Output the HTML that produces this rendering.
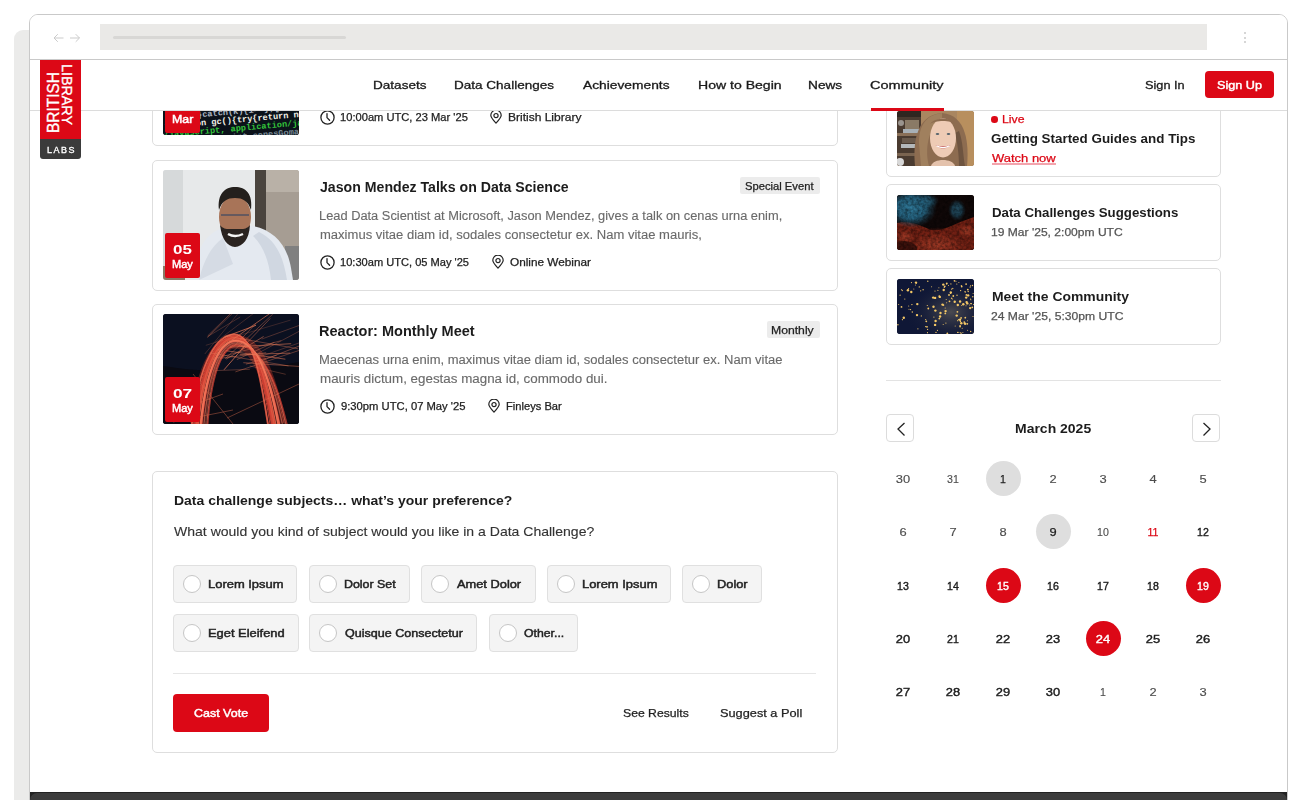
<!DOCTYPE html>
<html><head><meta charset="utf-8"><style>
html,body{margin:0;padding:0;}
body{width:1300px;height:800px;overflow:hidden;position:relative;background:#fff;font-family:"Liberation Sans",sans-serif;}
body>div{position:absolute;}
svg{display:block;}
</style></head><body>
<div style="left:14px;top:30px;width:40px;height:800px;background:#ebebea;border-top-left-radius:9px;"></div>
<div style="left:29px;top:14px;width:1259px;height:820px;background:#fff;border:1px solid #c9c9c9;border-radius:9px 9px 0 0;box-sizing:border-box;"></div>
<div style="left:152px;top:15px;width:686px;height:131px;border:1px solid #dedede;border-radius:5px;box-sizing:border-box;background:#fff;"></div>
<div style="left:163px;top:25px;width:136px;height:110px;border-radius:3px;overflow:hidden;background:#0c141c;"><svg width="136" height="110" viewBox="0 0 136 110" preserveAspectRatio="none">
<rect width="136" height="110" fill="#0b121a"/>
<g font-family="Liberation Mono" font-size="8.6" font-weight="700" transform="rotate(-5 68 98)">
<text x="8" y="81" fill="#6a7a86">xt/javascript"),a.load</text>
<text x="4" y="89.5" fill="#aab4c0">ontext}catch(k){i= };[</text>
<text x="2" y="98" fill="#f2f0e6">function gc(){try{return new a</text>
<text x="0" y="106.5" fill="#33c23a">/javascript, application/javascr</text>
<text x="6" y="115" fill="#7a8a96">text/javascript cenesGoma</text>
</g></svg></div>
<div style="left:165px;top:88px;width:35px;height:45px;background:#dc0816;border-radius:2px;"></div>
<div id="t0" style="left:173.36px;top:97.67px;font-size:13.5px;line-height:13.5px;color:#fff;white-space:nowrap;font-weight:700;transform:scaleX(1.2786);transform-origin:0 0;">23</div>
<div id="t1" style="left:172.13px;top:114.73px;font-size:10px;line-height:10px;color:#fff;white-space:nowrap;transform:scaleX(1.2328);transform-origin:0 0;-webkit-text-stroke:0.45px currentColor;">Mar</div>
<div style="left:320px;top:110px;width:15px;height:15px"><svg width="15" height="15" viewBox="0 0 15 15"><circle cx="7.5" cy="7.5" r="6.6" fill="none" stroke="#222" stroke-width="1.3"/><path d="M7 3.6 V7.6 L9.6 10.3" fill="none" stroke="#222" stroke-width="1.3" stroke-linecap="round" stroke-linejoin="round"/></svg></div>
<div id="t2" style="left:340.40px;top:112.11px;font-size:10.5px;line-height:10.5px;color:#222;white-space:nowrap;transform:scaleX(1.0611);transform-origin:0 0;-webkit-text-stroke:0.25px currentColor;">10:00am UTC, 23 Mar '25</div>
<div style="left:490px;top:110px;width:12px;height:14px"><svg width="12" height="14" viewBox="0 0 12 14"><path d="M6 13.2 C3.2 10.2 0.8 7.6 0.8 5.3 A5.2 5.2 0 0 1 11.2 5.3 C11.2 7.6 8.8 10.2 6 13.2 Z" fill="none" stroke="#222" stroke-width="1.2" stroke-linejoin="round"/><circle cx="6" cy="5.6" r="2.1" fill="none" stroke="#222" stroke-width="1.2"/></svg></div>
<div id="t3" style="left:507.54px;top:112.11px;font-size:10.5px;line-height:10.5px;color:#222;white-space:nowrap;transform:scaleX(1.1433);transform-origin:0 0;-webkit-text-stroke:0.25px currentColor;">British Library</div>
<div style="left:152px;top:160px;width:686px;height:131px;border:1px solid #dedede;border-radius:5px;box-sizing:border-box;background:#fff;"></div>
<div style="left:163px;top:170px;width:136px;height:110px;border-radius:3px;overflow:hidden;background:#e4e6e8;"><svg width="136" height="110" viewBox="0 0 136 110" preserveAspectRatio="none">
<rect width="136" height="110" fill="#e7e9ea"/>
<rect width="20" height="110" fill="#d6d9da"/>
<rect x="0" y="96" width="22" height="14" fill="#8a7a66"/>
<rect x="92" width="44" height="110" fill="#a69d93"/>
<rect x="92" width="11" height="110" fill="#4a443e"/>
<rect x="103" width="33" height="22" fill="#b9b1a7"/>
<rect x="122" y="76" width="14" height="34" fill="#808080"/>
<path d="M30 110 C32 84 40 64 60 58 L90 56 C110 60 124 74 128 98 L130 110 Z" fill="#e4e9f0"/>
<path d="M36 110 C40 92 48 76 60 68 L70 94 Z" fill="#d5dbe4"/>
<path d="M96 62 C112 70 120 84 124 110 L108 110 C106 90 100 76 90 66 Z" fill="#d0d7e1"/>
<ellipse cx="72" cy="47" rx="16" ry="22" fill="#a87458"/>
<path d="M56 40 C54 24 62 17 72 17 C83 17 90 24 88 40 C85 31 80 28 72 28 C64 28 59 31 56 40 Z" fill="#24201d"/>
<path d="M57 55 C59 70 64 76 72 77 C80 76 86 70 87 55 C83 60 79 59 72 59 C65 59 61 60 57 55 Z" fill="#2a2320"/>
<path d="M58 45 H86" stroke="#505060" stroke-width="1.6"/>
<path d="M65 64 Q72 68 80 64" stroke="#f4f4f4" stroke-width="2.4" fill="none"/>
</svg></div>
<div style="left:165px;top:233px;width:35px;height:45px;background:#dc0816;border-radius:2px;"></div>
<div id="t4" style="left:173.37px;top:242.67px;font-size:13.5px;line-height:13.5px;color:#fff;white-space:nowrap;font-weight:700;transform:scaleX(1.2561);transform-origin:0 0;">05</div>
<div id="t5" style="left:172.20px;top:259.74px;font-size:10px;line-height:10px;color:#fff;white-space:nowrap;transform:scaleX(1.1013);transform-origin:0 0;-webkit-text-stroke:0.45px currentColor;">May</div>
<div id="t6" style="left:320.25px;top:179.65px;font-size:14px;line-height:14px;color:#1c1c1c;white-space:nowrap;font-weight:700;transform:scaleX(1.0092);transform-origin:0 0;">Jason Mendez Talks on Data Science</div>
<div style="left:740px;top:177px;width:80px;height:17px;background:#ececec;border-radius:2px;"></div>
<div id="t7" style="left:744.93px;top:181.01px;font-size:10.5px;line-height:10.5px;color:#222;white-space:nowrap;transform:scaleX(1.0672);transform-origin:0 0;-webkit-text-stroke:0.25px currentColor;">Special Event</div>
<div id="t8" style="left:319.43px;top:209.64px;font-size:12px;line-height:12px;color:#6a6a6a;white-space:nowrap;transform:scaleX(1.0701);transform-origin:0 0;-webkit-text-stroke:0.12px currentColor;">Lead Data Scientist at Microsoft, Jason Mendez, gives a talk on cenas urna enim,</div>
<div id="t9" style="left:319.69px;top:229.04px;font-size:12px;line-height:12px;color:#6a6a6a;white-space:nowrap;transform:scaleX(1.0862);transform-origin:0 0;-webkit-text-stroke:0.12px currentColor;">maximus vitae diam id, sodales consectetur ex. Nam vitae mauris,</div>
<div style="left:320px;top:255px;width:15px;height:15px"><svg width="15" height="15" viewBox="0 0 15 15"><circle cx="7.5" cy="7.5" r="6.6" fill="none" stroke="#222" stroke-width="1.3"/><path d="M7 3.6 V7.6 L9.6 10.3" fill="none" stroke="#222" stroke-width="1.3" stroke-linecap="round" stroke-linejoin="round"/></svg></div>
<div id="t10" style="left:340.41px;top:257.11px;font-size:10.5px;line-height:10.5px;color:#222;white-space:nowrap;transform:scaleX(1.0557);transform-origin:0 0;-webkit-text-stroke:0.25px currentColor;">10:30am UTC, 05 May '25</div>
<div style="left:492px;top:255px;width:12px;height:14px"><svg width="12" height="14" viewBox="0 0 12 14"><path d="M6 13.2 C3.2 10.2 0.8 7.6 0.8 5.3 A5.2 5.2 0 0 1 11.2 5.3 C11.2 7.6 8.8 10.2 6 13.2 Z" fill="none" stroke="#222" stroke-width="1.2" stroke-linejoin="round"/><circle cx="6" cy="5.6" r="2.1" fill="none" stroke="#222" stroke-width="1.2"/></svg></div>
<div id="t11" style="left:510.12px;top:257.11px;font-size:10.5px;line-height:10.5px;color:#222;white-space:nowrap;transform:scaleX(1.1222);transform-origin:0 0;-webkit-text-stroke:0.25px currentColor;">Online Webinar</div>
<div style="left:152px;top:304px;width:686px;height:131px;border:1px solid #dedede;border-radius:5px;box-sizing:border-box;background:#fff;"></div>
<div style="left:163px;top:314px;width:136px;height:110px;border-radius:3px;overflow:hidden;background:#0a0e1a;"><svg width="136" height="110" viewBox="0 0 136 110" preserveAspectRatio="none">
<rect width="136" height="110" fill="#0b1020"/>
<path d="M0 52 C30 56 60 62 136 48 L136 110 L0 110 Z" fill="#0a0a12"/>
<path d="M34 110 C40 50 58 24 76 28 C96 32 108 70 116 110" stroke="#8a2a22" stroke-width="14" opacity="0.55" fill="none"/>
<path d="M35.1 112 C41.3 49.7 57.6 21.5 75.8 25.4 C95.6 29.6 105.1 70 113.0 112" stroke="#ff8a6a" stroke-width="1.5" opacity="0.68" fill="none"/><path d="M42.4 112 C47.1 51.9 61.2 25.8 77.3 30.5 C99.2 33.2 112.4 70 121.7 112" stroke="#d8503c" stroke-width="0.9" opacity="0.69" fill="none"/><path d="M38.1 112 C43.6 50.6 59.0 23.2 76.4 27.4 C97.0 31.0 108.1 70 116.5 112" stroke="#ff8a6a" stroke-width="0.9" opacity="0.60" fill="none"/><path d="M28.6 112 C36.1 47.8 54.3 17.6 74.5 20.8 C92.3 26.3 98.6 70 105.2 112" stroke="#e24a3a" stroke-width="1.9" opacity="0.75" fill="none"/><path d="M34.1 112 C40.5 49.4 57.1 20.9 75.6 24.7 C95.1 29.1 104.1 70 111.8 112" stroke="#d8503c" stroke-width="1.3" opacity="0.78" fill="none"/><path d="M38.2 112 C43.8 50.7 59.1 23.3 76.4 27.6 C97.1 31.1 108.2 70 116.7 112" stroke="#e24a3a" stroke-width="1.9" opacity="0.48" fill="none"/><path d="M30.4 112 C37.5 48.3 55.2 18.7 74.9 22.1 C93.2 27.2 100.4 70 107.3 112" stroke="#e24a3a" stroke-width="1.0" opacity="0.84" fill="none"/><path d="M32.9 112 C39.5 49.1 56.4 20.1 75.4 23.8 C94.4 28.4 102.9 70 110.2 112" stroke="#f06a50" stroke-width="1.5" opacity="0.71" fill="none"/><path d="M38.5 112 C44.0 50.8 59.3 23.5 76.5 27.8 C97.3 31.3 108.5 70 117.0 112" stroke="#e24a3a" stroke-width="1.4" opacity="0.68" fill="none"/><path d="M32.0 112 C38.8 48.8 56.0 19.6 75.2 23.2 C94.0 28.0 102.0 70 109.2 112" stroke="#e24a3a" stroke-width="2.2" opacity="0.80" fill="none"/><path d="M32.7 112 C39.3 49.0 56.3 20.0 75.3 23.7 C94.3 28.3 102.7 70 110.0 112" stroke="#c83a30" stroke-width="1.0" opacity="0.46" fill="none"/><path d="M37.1 112 C42.9 50.3 58.6 22.7 76.2 26.8 C96.6 30.6 107.1 70 115.4 112" stroke="#e24a3a" stroke-width="0.8" opacity="0.87" fill="none"/><path d="M34.0 112 C40.4 49.4 57.0 20.8 75.6 24.6 C95.0 29.0 104.0 70 111.5 112" stroke="#e24a3a" stroke-width="2.1" opacity="0.56" fill="none"/><path d="M43.7 112 C48.1 52.3 61.8 26.6 77.5 31.4 C99.8 33.8 113.7 70 123.2 112" stroke="#ff8a6a" stroke-width="0.7" opacity="0.94" fill="none"/><path d="M34.2 112 C40.5 49.4 57.1 20.9 75.6 24.7 C95.1 29.1 104.2 70 111.8 112" stroke="#f06a50" stroke-width="0.7" opacity="0.84" fill="none"/><path d="M31.9 112 C38.7 48.8 55.9 19.5 75.2 23.1 C93.9 27.9 101.9 70 109.0 112" stroke="#c83a30" stroke-width="0.7" opacity="0.46" fill="none"/><path d="M34.4 112 C40.7 49.5 57.2 21.0 75.7 24.9 C95.2 29.2 104.4 70 112.1 112" stroke="#f06a50" stroke-width="2.1" opacity="0.57" fill="none"/><path d="M28.8 112 C36.3 47.8 54.4 17.7 74.6 21.0 C92.4 26.4 98.8 70 105.4 112" stroke="#ff8a6a" stroke-width="0.7" opacity="0.54" fill="none"/><path d="M37.1 112 C42.9 50.3 58.5 22.6 76.2 26.7 C96.5 30.5 107.1 70 115.3 112" stroke="#f06a50" stroke-width="1.3" opacity="0.94" fill="none"/><path d="M40.9 112 C45.9 51.5 60.4 24.9 77.0 29.4 C98.4 32.4 110.9 70 119.8 112" stroke="#ff8a6a" stroke-width="1.3" opacity="0.51" fill="none"/><path d="M34.6 112 C40.9 49.6 57.3 21.1 75.7 25.0 C95.3 29.3 104.6 70 112.3 112" stroke="#c83a30" stroke-width="0.9" opacity="0.88" fill="none"/><path d="M44.5 112 C48.8 52.6 62.3 27.1 77.7 32.0 C100.3 34.3 114.5 70 124.3 112" stroke="#e24a3a" stroke-width="1.5" opacity="0.56" fill="none"/><path d="M34.1 112 C40.5 49.4 57.0 20.9 75.6 24.7 C95.0 29.0 104.1 70 111.7 112" stroke="#d8503c" stroke-width="2.0" opacity="0.50" fill="none"/><path d="M44.8 112 C49.0 52.6 62.4 27.3 77.8 32.2 C100.4 34.4 114.8 70 124.6 112" stroke="#c83a30" stroke-width="0.9" opacity="0.45" fill="none"/><path d="M38.0 112 C43.6 50.6 59.0 23.2 76.4 27.4 C97.0 31.0 108.0 70 116.4 112" stroke="#ff8a6a" stroke-width="1.9" opacity="0.49" fill="none"/><path d="M28.6 112 C36.1 47.8 54.3 17.6 74.5 20.8 C92.3 26.3 98.6 70 105.1 112" stroke="#f06a50" stroke-width="1.5" opacity="0.46" fill="none"/><path d="M62.1 44.9 L109.7 0.2" stroke="#e67a58" stroke-width="0.82" opacity="0.47"/><path d="M63.2 45.1 L100.6 22.5" stroke="#e67a58" stroke-width="0.71" opacity="0.76"/><path d="M49.5 45.2 L118.3 26.6" stroke="#e67a58" stroke-width="0.59" opacity="0.64"/><path d="M44.7 21.9 L88.1 -20.6" stroke="#e67a58" stroke-width="0.53" opacity="0.77"/><path d="M63.5 36.8 L122.4 45.2" stroke="#e67a58" stroke-width="0.66" opacity="0.86"/><path d="M98.6 25.1 L163.7 1.4" stroke="#e67a58" stroke-width="0.71" opacity="0.44"/><path d="M52.7 56.6 L86.9 55.3" stroke="#e67a58" stroke-width="0.61" opacity="0.52"/><path d="M42.8 31.3 L127.5 6.1" stroke="#e67a58" stroke-width="0.45" opacity="0.47"/><path d="M67.0 33.2 L128.2 29.7" stroke="#e67a58" stroke-width="0.87" opacity="0.69"/><path d="M95.4 39.0 L138.4 16.1" stroke="#e67a58" stroke-width="0.42" opacity="0.70"/><path d="M44.5 22.7 L77.2 3.0" stroke="#e67a58" stroke-width="0.44" opacity="0.63"/><path d="M62.1 21.8 L135.1 34.8" stroke="#e67a58" stroke-width="0.46" opacity="0.88"/><path d="M60.5 23.4 L93.0 11.3" stroke="#e67a58" stroke-width="0.83" opacity="0.87"/><path d="M41.8 40.0 L86.1 -13.9" stroke="#e67a58" stroke-width="0.59" opacity="0.41"/><path d="M44.3 23.6 L77.0 -7.9" stroke="#e67a58" stroke-width="0.61" opacity="0.57"/><path d="M96.1 47.8 L149.8 26.7" stroke="#e67a58" stroke-width="0.67" opacity="0.66"/><path d="M70.9 32.4 L92.7 9.9" stroke="#e67a58" stroke-width="0.88" opacity="0.46"/><path d="M86.8 46.4 L165.8 18.4" stroke="#e67a58" stroke-width="0.58" opacity="0.47"/><path d="M76.7 40.7 L127.2 39.1" stroke="#e67a58" stroke-width="0.87" opacity="0.65"/><path d="M54.5 36.2 L110.2 -2.9" stroke="#e67a58" stroke-width="0.80" opacity="0.78"/><path d="M52.0 28.6 L120.0 -22.9" stroke="#e67a58" stroke-width="0.50" opacity="0.47"/><path d="M61.0 55.8 L83.3 30.3" stroke="#e67a58" stroke-width="0.89" opacity="0.81"/><path d="M46.8 38.9 L125.5 51.9" stroke="#e67a58" stroke-width="0.59" opacity="0.66"/><path d="M80.3 48.7 L147.7 53.2" stroke="#e67a58" stroke-width="0.56" opacity="0.81"/><path d="M56.7 44.3 L103.2 38.7" stroke="#e67a58" stroke-width="0.58" opacity="0.72"/><path d="M73.8 45.6 L111.4 28.2" stroke="#e67a58" stroke-width="0.78" opacity="0.53"/><path d="M86.8 51.9 L122.7 60.3" stroke="#e67a58" stroke-width="0.45" opacity="0.67"/><path d="M78.4 34.7 L107.3 4.4" stroke="#e67a58" stroke-width="0.81" opacity="0.53"/><path d="M82.9 50.2 L113.7 41.2" stroke="#e67a58" stroke-width="0.51" opacity="0.79"/><path d="M72.4 57.9 L157.5 29.2" stroke="#e67a58" stroke-width="0.48" opacity="0.82"/>
<path d="M4 100 L60 80 M10 108 L70 96 M30 60 L70 110 M64 104 L136 70" stroke="#e07050" stroke-width="0.6" opacity="0.7"/>
</svg></div>
<div style="left:165px;top:377px;width:35px;height:45px;background:#dc0816;border-radius:2px;"></div>
<div id="t12" style="left:173.36px;top:386.67px;font-size:13.5px;line-height:13.5px;color:#fff;white-space:nowrap;font-weight:700;transform:scaleX(1.2786);transform-origin:0 0;">07</div>
<div id="t13" style="left:172.20px;top:403.74px;font-size:10px;line-height:10px;color:#fff;white-space:nowrap;transform:scaleX(1.1013);transform-origin:0 0;-webkit-text-stroke:0.45px currentColor;">May</div>
<div id="t14" style="left:319.46px;top:323.65px;font-size:14px;line-height:14px;color:#1c1c1c;white-space:nowrap;font-weight:700;transform:scaleX(1.0369);transform-origin:0 0;">Reactor: Monthly Meet</div>
<div style="left:767px;top:321px;width:53px;height:17px;background:#ececec;border-radius:2px;"></div>
<div id="t15" style="left:771.33px;top:325.01px;font-size:10.5px;line-height:10.5px;color:#222;white-space:nowrap;transform:scaleX(1.1611);transform-origin:0 0;-webkit-text-stroke:0.25px currentColor;">Monthly</div>
<div id="t16" style="left:319.42px;top:353.64px;font-size:12px;line-height:12px;color:#6a6a6a;white-space:nowrap;transform:scaleX(1.0843);transform-origin:0 0;-webkit-text-stroke:0.12px currentColor;">Maecenas urna enim, maximus vitae diam id, sodales consectetur ex. Nam vitae</div>
<div id="t17" style="left:319.66px;top:373.04px;font-size:12px;line-height:12px;color:#6a6a6a;white-space:nowrap;transform:scaleX(1.1138);transform-origin:0 0;-webkit-text-stroke:0.12px currentColor;">mauris dictum, egestas magna id, commodo dui.</div>
<div style="left:320px;top:399px;width:15px;height:15px"><svg width="15" height="15" viewBox="0 0 15 15"><circle cx="7.5" cy="7.5" r="6.6" fill="none" stroke="#222" stroke-width="1.3"/><path d="M7 3.6 V7.6 L9.6 10.3" fill="none" stroke="#222" stroke-width="1.3" stroke-linecap="round" stroke-linejoin="round"/></svg></div>
<div id="t18" style="left:340.93px;top:401.11px;font-size:10.5px;line-height:10.5px;color:#222;white-space:nowrap;transform:scaleX(1.0695);transform-origin:0 0;-webkit-text-stroke:0.25px currentColor;">9:30pm UTC, 07 May '25</div>
<div style="left:488px;top:399px;width:12px;height:14px"><svg width="12" height="14" viewBox="0 0 12 14"><path d="M6 13.2 C3.2 10.2 0.8 7.6 0.8 5.3 A5.2 5.2 0 0 1 11.2 5.3 C11.2 7.6 8.8 10.2 6 13.2 Z" fill="none" stroke="#222" stroke-width="1.2" stroke-linejoin="round"/><circle cx="6" cy="5.6" r="2.1" fill="none" stroke="#222" stroke-width="1.2"/></svg></div>
<div id="t19" style="left:505.60px;top:401.11px;font-size:10.5px;line-height:10.5px;color:#222;white-space:nowrap;transform:scaleX(1.0609);transform-origin:0 0;-webkit-text-stroke:0.25px currentColor;">Finleys Bar</div>
<div style="left:152px;top:471px;width:686px;height:282px;border:1px solid #dedede;border-radius:5px;box-sizing:border-box;background:#fff;"></div>
<div id="t20" style="left:173.89px;top:494.40px;font-size:13px;line-height:13px;color:#1c1c1c;white-space:nowrap;font-weight:700;transform:scaleX(1.0754);transform-origin:0 0;">Data challenge subjects&#8230; what&#8217;s your preference?</div>
<div id="t21" style="left:174.00px;top:525.20px;font-size:13px;line-height:13px;color:#333;white-space:nowrap;transform:scaleX(1.0789);transform-origin:0 0;-webkit-text-stroke:0.12px currentColor;">What would you kind of subject would you like in a Data Challenge?</div>
<div style="left:173px;top:565px;width:124px;height:38px;background:#f4f4f4;border:1px solid #e0e0e0;border-radius:4px;box-sizing:border-box;"></div>
<div style="left:183px;top:575px;width:18px;height:18px;background:#fff;border:1px solid #c6c6c6;border-radius:50%;box-sizing:border-box;"></div>
<div id="t22" style="left:207.82px;top:578.59px;font-size:11px;line-height:11px;color:#222;white-space:nowrap;transform:scaleX(1.1762);transform-origin:0 0;-webkit-text-stroke:0.45px currentColor;">Lorem Ipsum</div>
<div style="left:309px;top:565px;width:101px;height:38px;background:#f4f4f4;border:1px solid #e0e0e0;border-radius:4px;box-sizing:border-box;"></div>
<div style="left:319px;top:575px;width:18px;height:18px;background:#fff;border:1px solid #c6c6c6;border-radius:50%;box-sizing:border-box;"></div>
<div id="t23" style="left:343.85px;top:578.59px;font-size:11px;line-height:11px;color:#222;white-space:nowrap;transform:scaleX(1.1271);transform-origin:0 0;-webkit-text-stroke:0.45px currentColor;">Dolor Set</div>
<div style="left:421.2px;top:565px;width:115px;height:38px;background:#f4f4f4;border:1px solid #e0e0e0;border-radius:4px;box-sizing:border-box;"></div>
<div style="left:431.2px;top:575px;width:18px;height:18px;background:#fff;border:1px solid #c6c6c6;border-radius:50%;box-sizing:border-box;"></div>
<div id="t24" style="left:457.19px;top:578.59px;font-size:11px;line-height:11px;color:#222;white-space:nowrap;transform:scaleX(1.1656);transform-origin:0 0;-webkit-text-stroke:0.45px currentColor;">Amet Dolor</div>
<div style="left:547px;top:565px;width:124px;height:38px;background:#f4f4f4;border:1px solid #e0e0e0;border-radius:4px;box-sizing:border-box;"></div>
<div style="left:557px;top:575px;width:18px;height:18px;background:#fff;border:1px solid #c6c6c6;border-radius:50%;box-sizing:border-box;"></div>
<div id="t25" style="left:581.82px;top:578.59px;font-size:11px;line-height:11px;color:#222;white-space:nowrap;transform:scaleX(1.1746);transform-origin:0 0;-webkit-text-stroke:0.45px currentColor;">Lorem Ipsum</div>
<div style="left:682px;top:565px;width:80px;height:38px;background:#f4f4f4;border:1px solid #e0e0e0;border-radius:4px;box-sizing:border-box;"></div>
<div style="left:692px;top:575px;width:18px;height:18px;background:#fff;border:1px solid #c6c6c6;border-radius:50%;box-sizing:border-box;"></div>
<div id="t26" style="left:716.83px;top:578.59px;font-size:11px;line-height:11px;color:#222;white-space:nowrap;transform:scaleX(1.1647);transform-origin:0 0;-webkit-text-stroke:0.45px currentColor;">Dolor</div>
<div style="left:173px;top:614px;width:126px;height:38px;background:#f4f4f4;border:1px solid #e0e0e0;border-radius:4px;box-sizing:border-box;"></div>
<div style="left:183px;top:624px;width:18px;height:18px;background:#fff;border:1px solid #c6c6c6;border-radius:50%;box-sizing:border-box;"></div>
<div id="t27" style="left:207.82px;top:627.59px;font-size:11px;line-height:11px;color:#222;white-space:nowrap;transform:scaleX(1.1720);transform-origin:0 0;-webkit-text-stroke:0.45px currentColor;">Eget Eleifend</div>
<div style="left:309.4px;top:614px;width:168px;height:38px;background:#f4f4f4;border:1px solid #e0e0e0;border-radius:4px;box-sizing:border-box;"></div>
<div style="left:319.4px;top:624px;width:18px;height:18px;background:#fff;border:1px solid #c6c6c6;border-radius:50%;box-sizing:border-box;"></div>
<div id="t28" style="left:344.81px;top:627.59px;font-size:11px;line-height:11px;color:#222;white-space:nowrap;transform:scaleX(1.1409);transform-origin:0 0;-webkit-text-stroke:0.45px currentColor;">Quisque Consectetur</div>
<div style="left:488.5px;top:614px;width:89px;height:38px;background:#f4f4f4;border:1px solid #e0e0e0;border-radius:4px;box-sizing:border-box;"></div>
<div style="left:498.5px;top:624px;width:18px;height:18px;background:#fff;border:1px solid #c6c6c6;border-radius:50%;box-sizing:border-box;"></div>
<div id="t29" style="left:523.92px;top:627.59px;font-size:11px;line-height:11px;color:#222;white-space:nowrap;transform:scaleX(1.1143);transform-origin:0 0;-webkit-text-stroke:0.45px currentColor;">Other...</div>
<div style="left:173px;top:673px;width:643px;height:1px;background:#e6e6e6;"></div>
<div style="left:173px;top:694px;width:96px;height:38px;background:#dc0816;border-radius:4px;"></div>
<div id="t30" style="left:193.73px;top:708.17px;font-size:11.5px;line-height:11.5px;color:#fff;white-space:nowrap;transform:scaleX(1.0843);transform-origin:0 0;-webkit-text-stroke:0.45px currentColor;">Cast Vote</div>
<div id="t31" style="left:623.47px;top:708.37px;font-size:11.5px;line-height:11.5px;color:#222;white-space:nowrap;transform:scaleX(1.0612);transform-origin:0 0;-webkit-text-stroke:0.25px currentColor;">See Results</div>
<div id="t32" style="left:720.45px;top:708.37px;font-size:11.5px;line-height:11.5px;color:#222;white-space:nowrap;transform:scaleX(1.1096);transform-origin:0 0;-webkit-text-stroke:0.25px currentColor;">Suggest a Poll</div>
<div style="left:886px;top:100px;width:335px;height:77px;border:1px solid #dedede;border-radius:5px;box-sizing:border-box;background:#fff;"></div>
<div style="left:897px;top:111px;width:77px;height:55px;border-radius:3px;overflow:hidden;background:#8a6a4c;"><svg width="77" height="55" viewBox="0 0 77 55" preserveAspectRatio="none">
<rect width="77" height="55" fill="#a98660"/>
<rect width="24" height="55" fill="#4a3b30"/>
<rect x="0" y="0" width="24" height="6" fill="#2e2620"/>
<rect x="0" y="22" width="24" height="3" fill="#8a7058"/><rect x="0" y="42" width="24" height="3" fill="#7a6450"/>
<rect x="8" y="9" width="14" height="11" fill="#8a7a66"/><rect x="6" y="18" width="16" height="4" fill="#a8b0b6"/>
<rect x="4" y="33" width="18" height="4" fill="#b4b8ba"/><rect x="5" y="27" width="14" height="5" fill="#6a5a4c"/>
<circle cx="4" cy="12" r="3" fill="#9a948e"/><circle cx="3" cy="51" r="4" fill="#d8d8d8"/>
<rect x="60" width="17" height="55" fill="#b88f5e"/>
<path d="M18 55 C16 34 18 4 45 2 C70 4 72 34 70 55 Z" fill="#8d6c50"/>
<path d="M45 2 C28 4 22 16 22 32 L24 55 L32 55 C28 40 30 18 45 7 Z" fill="#a0805e"/>
<path d="M62 20 C66 30 66 44 68 55 L62 55 C62 42 60 30 58 22 Z" fill="#6e5440"/>
<ellipse cx="46" cy="27" rx="13" ry="19.5" fill="#eecbb5"/>
<path d="M33 13 C38 6 54 6 59 13 C54 9 38 9 33 13 Z" fill="#8d6c50"/>
<path d="M34 55 C36 47 56 47 58 55 Z" fill="#e4c2ac"/>
<path d="M38.5 34 Q46 41 53.5 34 Q46 36.5 38.5 34 Z" fill="#c0585a"/>
<path d="M39.5 34.8 Q46 38.5 52.5 34.8" stroke="#ffffff" stroke-width="1.3" fill="none"/>
<ellipse cx="40.5" cy="23" rx="1.8" ry="1" fill="#55626c"/><ellipse cx="51.5" cy="23" rx="1.8" ry="1" fill="#55626c"/>
</svg></div>
<div style="left:886px;top:184px;width:335px;height:77px;border:1px solid #dedede;border-radius:5px;box-sizing:border-box;background:#fff;"></div>
<div style="left:897px;top:195px;width:77px;height:55px;border-radius:3px;overflow:hidden;background:#1a0d0c;"><svg width="77" height="55" viewBox="0 0 77 55" preserveAspectRatio="none">
<defs>
<radialGradient id="sb" cx="0.5" cy="0.5" r="0.5"><stop offset="0" stop-color="#2f7898"/><stop offset="0.55" stop-color="#24607c"/><stop offset="1" stop-color="#1a3a4a" stop-opacity="0"/></radialGradient>
<radialGradient id="sr" cx="0.5" cy="0.5" r="0.5"><stop offset="0" stop-color="#a03a26"/><stop offset="0.6" stop-color="#7a2416"/><stop offset="1" stop-color="#5a160e" stop-opacity="0"/></radialGradient>
<filter id="sf"><feTurbulence type="fractalNoise" baseFrequency="0.35" numOctaves="2" seed="3"/><feColorMatrix values="0 0 0 0 0  0 0 0 0 0  0 0 0 0 0  0 0 0 -1.6 1.1"/></filter>
</defs>
<rect width="77" height="55" fill="#100808"/>
<path d="M0 28 C12 25 22 30 34 35 C46 37 58 28 77 22 L77 55 L0 55 Z" fill="#7a2315"/>
<ellipse cx="40" cy="50" rx="40" ry="18" fill="url(#sr)"/>
<ellipse cx="8" cy="42" rx="14" ry="10" fill="url(#sr)"/>
<ellipse cx="70" cy="36" rx="14" ry="10" fill="url(#sr)"/>
<ellipse cx="14" cy="13" rx="26" ry="20" fill="url(#sb)"/><ellipse cx="30" cy="6" rx="12" ry="8" fill="url(#sb)" opacity="0.6"/>
<ellipse cx="60" cy="15" rx="9" ry="11" fill="url(#sb)" opacity="0.6"/>

<ellipse cx="6" cy="54" rx="14" ry="8" fill="#1a0806" opacity="0.6"/><rect width="77" height="55" filter="url(#sf)" opacity="0.55"/>
</svg></div>
<div id="t33" style="left:991.54px;top:206.20px;font-size:13px;line-height:13px;color:#1c1c1c;white-space:nowrap;font-weight:700;transform:scaleX(1.0193);transform-origin:0 0;">Data Challenges Suggestions</div>
<div id="t34" style="left:990.68px;top:227.29px;font-size:11px;line-height:11px;color:#555;white-space:nowrap;transform:scaleX(1.0966);transform-origin:0 0;-webkit-text-stroke:0.25px currentColor;">19 Mar '25, 2:00pm UTC</div>
<div style="left:886px;top:268px;width:335px;height:77px;border:1px solid #dedede;border-radius:5px;box-sizing:border-box;background:#fff;"></div>
<div style="left:897px;top:279px;width:77px;height:55px;border-radius:3px;overflow:hidden;background:#0e1636;"><svg width="77" height="55" viewBox="0 0 77 55" preserveAspectRatio="none"><defs><radialGradient id="lg" cx="0.7" cy="0.6" r="0.6"><stop offset="0" stop-color="#4a4a50"/><stop offset="1" stop-color="#0f1736" stop-opacity="0"/></radialGradient></defs><rect width="77" height="55" fill="#0f1736"/><rect width="77" height="55" fill="url(#lg)"/><circle cx="4.5" cy="27.9" r="0.9" fill="#f3c766"/><circle cx="48.6" cy="32.1" r="1.2" fill="#f3c766"/><circle cx="30.5" cy="53.7" r="0.6" fill="#f3c766"/><circle cx="22.3" cy="7.9" r="0.7" fill="#f3c766"/><circle cx="43.1" cy="37.5" r="1.2" fill="#f3c766"/><circle cx="49.2" cy="20.5" r="0.5" fill="#f3c766"/><circle cx="43.5" cy="34.0" r="1.2" fill="#f3c766"/><circle cx="53.8" cy="13.4" r="1.2" fill="#f3c766"/><circle cx="38.1" cy="18.9" r="1.2" fill="#f3c766"/><circle cx="75.5" cy="6.5" r="0.7" fill="#f3c766"/><circle cx="11.7" cy="26.9" r="0.5" fill="#f3c766"/><circle cx="72.7" cy="26.1" r="0.5" fill="#f3c766"/><circle cx="56.3" cy="17.0" r="0.9" fill="#f3c766"/><circle cx="1.7" cy="25.4" r="0.5" fill="#f3c766"/><circle cx="38.0" cy="12.0" r="0.6" fill="#f3c766"/><circle cx="30.6" cy="50.4" r="0.6" fill="#f3c766"/><circle cx="63.1" cy="47.5" r="0.9" fill="#f3c766"/><circle cx="76.0" cy="37.5" r="0.6" fill="#f3c766"/><circle cx="11.6" cy="9.7" r="0.6" fill="#f3c766"/><circle cx="0.9" cy="45.7" r="0.7" fill="#f3c766"/><circle cx="67.3" cy="43.9" r="0.9" fill="#f3c766"/><circle cx="30.3" cy="26.5" r="0.6" fill="#f3c766"/><circle cx="5.2" cy="11.5" r="0.7" fill="#f3c766"/><circle cx="46.3" cy="5.6" r="1.2" fill="#f3c766"/><circle cx="7.8" cy="20.0" r="0.6" fill="#f3c766"/><circle cx="47.3" cy="8.2" r="0.7" fill="#f3c766"/><circle cx="46.4" cy="26.1" r="0.9" fill="#f3c766"/><circle cx="76.5" cy="25.6" r="0.5" fill="#f3c766"/><circle cx="36.9" cy="38.1" r="0.6" fill="#f3c766"/><circle cx="73.2" cy="29.1" r="1.2" fill="#f3c766"/><circle cx="70.4" cy="41.7" r="0.5" fill="#f3c766"/><circle cx="53.6" cy="14.4" r="0.6" fill="#f3c766"/><circle cx="60.7" cy="41.7" r="0.6" fill="#f3c766"/><circle cx="63.0" cy="40.7" r="1.2" fill="#f3c766"/><circle cx="60.8" cy="26.0" r="1.2" fill="#f3c766"/><circle cx="73.7" cy="24.6" r="0.7" fill="#f3c766"/><circle cx="73.5" cy="20.1" r="0.6" fill="#f3c766"/><circle cx="36.2" cy="18.6" r="1.2" fill="#f3c766"/><circle cx="64.7" cy="26.4" r="0.5" fill="#f3c766"/><circle cx="64.3" cy="6.6" r="0.6" fill="#f3c766"/><circle cx="55.8" cy="9.4" r="0.6" fill="#f3c766"/><circle cx="45.5" cy="25.6" r="1.2" fill="#f3c766"/><circle cx="63.6" cy="53.9" r="0.7" fill="#f3c766"/><circle cx="12.0" cy="30.2" r="0.5" fill="#f3c766"/><circle cx="40.5" cy="51.3" r="0.6" fill="#f3c766"/><circle cx="63.6" cy="11.6" r="0.7" fill="#f3c766"/><circle cx="38.6" cy="42.0" r="1.2" fill="#f3c766"/><circle cx="69.6" cy="23.1" r="1.2" fill="#f3c766"/><circle cx="67.2" cy="42.7" r="0.6" fill="#f3c766"/><circle cx="42.8" cy="17.9" r="1.2" fill="#f3c766"/><circle cx="4.4" cy="10.5" r="0.5" fill="#f3c766"/><circle cx="70.3" cy="24.4" r="1.2" fill="#f3c766"/><circle cx="46.7" cy="11.0" r="1.2" fill="#f3c766"/><circle cx="64.7" cy="7.5" r="0.9" fill="#f3c766"/><circle cx="24.3" cy="36.9" r="0.6" fill="#f3c766"/><circle cx="26.1" cy="10.8" r="0.7" fill="#f3c766"/><circle cx="60.7" cy="53.4" r="0.7" fill="#f3c766"/><circle cx="20.9" cy="49.8" r="0.6" fill="#f3c766"/><circle cx="63.1" cy="46.7" r="0.7" fill="#f3c766"/><circle cx="31.3" cy="29.5" r="0.9" fill="#f3c766"/><circle cx="53.9" cy="4.9" r="0.6" fill="#f3c766"/><circle cx="48.9" cy="44.1" r="0.6" fill="#f3c766"/><circle cx="18.4" cy="6.0" r="0.5" fill="#f3c766"/><circle cx="40.9" cy="11.3" r="0.6" fill="#f3c766"/><circle cx="75.3" cy="28.3" r="0.9" fill="#f3c766"/><circle cx="38.1" cy="45.9" r="1.2" fill="#f3c766"/><circle cx="23.7" cy="11.8" r="0.6" fill="#f3c766"/><circle cx="64.1" cy="38.9" r="0.9" fill="#f3c766"/><circle cx="76.2" cy="54.0" r="0.5" fill="#f3c766"/><circle cx="5.4" cy="40.7" r="0.6" fill="#f3c766"/><circle cx="39.0" cy="53.4" r="0.7" fill="#f3c766"/><circle cx="75.8" cy="17.8" r="0.7" fill="#f3c766"/><circle cx="16.8" cy="10.1" r="0.5" fill="#f3c766"/><circle cx="36.5" cy="27.7" r="1.2" fill="#f3c766"/><circle cx="59.8" cy="5.0" r="0.6" fill="#f3c766"/><circle cx="30.8" cy="2.3" r="0.7" fill="#f3c766"/><circle cx="60.4" cy="32.8" r="0.9" fill="#f3c766"/><circle cx="64.3" cy="44.3" r="1.2" fill="#f3c766"/><circle cx="49.5" cy="4.7" r="0.7" fill="#f3c766"/><circle cx="73.9" cy="20.7" r="0.5" fill="#f3c766"/><circle cx="48.3" cy="34.4" r="0.9" fill="#f3c766"/><circle cx="20.3" cy="25.1" r="1.2" fill="#f3c766"/><circle cx="69.1" cy="5.1" r="0.9" fill="#f3c766"/><circle cx="19.4" cy="4.1" r="0.6" fill="#f3c766"/><circle cx="15.3" cy="33.0" r="0.7" fill="#f3c766"/><circle cx="47.8" cy="7.3" r="0.9" fill="#f3c766"/><circle cx="52.0" cy="16.0" r="0.9" fill="#f3c766"/><circle cx="42.3" cy="17.1" r="0.9" fill="#f3c766"/><circle cx="74.5" cy="24.7" r="0.6" fill="#f3c766"/><circle cx="70.6" cy="51.2" r="0.5" fill="#f3c766"/><circle cx="68.3" cy="38.7" r="0.9" fill="#f3c766"/><circle cx="52.5" cy="22.3" r="0.9" fill="#f3c766"/><circle cx="69.4" cy="15.9" r="0.9" fill="#f3c766"/><circle cx="30.0" cy="47.8" r="0.9" fill="#f3c766"/><circle cx="58.2" cy="47.0" r="0.5" fill="#f3c766"/><circle cx="68.1" cy="44.7" r="1.2" fill="#f3c766"/><circle cx="42.3" cy="39.6" r="0.9" fill="#f3c766"/><circle cx="20.0" cy="36.1" r="1.2" fill="#f3c766"/><circle cx="51.5" cy="6.6" r="0.5" fill="#f3c766"/><circle cx="34.6" cy="7.7" r="0.5" fill="#f3c766"/><circle cx="13.5" cy="30.6" r="0.7" fill="#f3c766"/><circle cx="57.7" cy="22.7" r="1.2" fill="#f3c766"/><circle cx="38.4" cy="31.6" r="1.2" fill="#f3c766"/><circle cx="49.7" cy="23.8" r="0.5" fill="#f3c766"/><circle cx="61.9" cy="53.3" r="0.5" fill="#f3c766"/><circle cx="65.9" cy="53.5" r="0.5" fill="#f3c766"/><circle cx="65.2" cy="49.2" r="0.5" fill="#f3c766"/><circle cx="48.2" cy="29.1" r="0.5" fill="#f3c766"/><circle cx="49.8" cy="4.5" r="0.9" fill="#f3c766"/><circle cx="71.2" cy="12.5" r="0.7" fill="#f3c766"/><circle cx="55.3" cy="19.9" r="0.5" fill="#f3c766"/><circle cx="61.4" cy="40.7" r="0.6" fill="#f3c766"/><circle cx="14.9" cy="25.6" r="0.7" fill="#f3c766"/><circle cx="69.0" cy="26.7" r="0.5" fill="#f3c766"/><circle cx="73.1" cy="8.1" r="0.6" fill="#f3c766"/><circle cx="54.7" cy="10.1" r="0.7" fill="#f3c766"/><circle cx="57.5" cy="1.8" r="0.9" fill="#f3c766"/><circle cx="64.6" cy="54.2" r="0.5" fill="#f3c766"/><circle cx="73.6" cy="6.8" r="0.6" fill="#f3c766"/><circle cx="29.3" cy="42.3" r="0.9" fill="#f3c766"/><circle cx="6.8" cy="38.8" r="1.2" fill="#f3c766"/><circle cx="70.8" cy="10.6" r="0.9" fill="#f3c766"/><circle cx="59.0" cy="2.2" r="0.5" fill="#f3c766"/><circle cx="61.9" cy="3.4" r="0.5" fill="#f3c766"/><circle cx="69.2" cy="18.6" r="1.2" fill="#f3c766"/><circle cx="71.2" cy="16.4" r="1.2" fill="#f3c766"/><circle cx="73.7" cy="52.5" r="0.7" fill="#f3c766"/><circle cx="70.3" cy="44.8" r="0.9" fill="#f3c766"/><circle cx="63.4" cy="42.5" r="0.7" fill="#f3c766"/><circle cx="66.3" cy="25.3" r="1.2" fill="#f3c766"/><circle cx="19.0" cy="3.6" r="1.2" fill="#f3c766"/><circle cx="41.9" cy="8.8" r="0.5" fill="#f3c766"/><circle cx="76.1" cy="14.6" r="0.5" fill="#f3c766"/><circle cx="68.6" cy="12.9" r="0.5" fill="#f3c766"/><circle cx="60.0" cy="16.2" r="0.7" fill="#f3c766"/><circle cx="28.7" cy="40.6" r="0.6" fill="#f3c766"/><circle cx="14.3" cy="13.0" r="1.2" fill="#f3c766"/><circle cx="14.5" cy="3.6" r="0.6" fill="#f3c766"/><circle cx="50.3" cy="54.5" r="0.9" fill="#f3c766"/><circle cx="68.0" cy="12.7" r="0.7" fill="#f3c766"/><circle cx="3.1" cy="16.2" r="0.6" fill="#f3c766"/><circle cx="46.2" cy="45.5" r="0.5" fill="#f3c766"/><circle cx="28.7" cy="47.6" r="0.7" fill="#f3c766"/><circle cx="59.7" cy="36.6" r="1.2" fill="#f3c766"/><circle cx="54.6" cy="19.2" r="0.7" fill="#f3c766"/><circle cx="10.9" cy="11.2" r="1.2" fill="#f3c766"/><circle cx="63.1" cy="22.5" r="1.2" fill="#f3c766"/></svg></div>
<div id="t35" style="left:991.50px;top:290.20px;font-size:13px;line-height:13px;color:#1c1c1c;white-space:nowrap;font-weight:700;transform:scaleX(1.0717);transform-origin:0 0;">Meet the Community</div>
<div id="t36" style="left:990.95px;top:311.29px;font-size:11px;line-height:11px;color:#555;white-space:nowrap;transform:scaleX(1.1027);transform-origin:0 0;-webkit-text-stroke:0.25px currentColor;">24 Mar '25, 5:30pm UTC</div>
<div style="left:991px;top:116.3px;width:6.5px;height:6.5px;background:#dc0816;border-radius:50%;"></div>
<div id="t37" style="left:1002.20px;top:114.17px;font-size:11.5px;line-height:11.5px;color:#dc0816;white-space:nowrap;transform:scaleX(1.0650);transform-origin:0 0;-webkit-text-stroke:0.25px currentColor;">Live</div>
<div id="t38" style="left:990.98px;top:132.10px;font-size:13px;line-height:13px;color:#1c1c1c;white-space:nowrap;font-weight:700;transform:scaleX(1.0304);transform-origin:0 0;">Getting Started Guides and Tips</div>
<div id="t39" style="left:991.50px;top:152.79px;font-size:11px;line-height:11px;color:#dc0816;white-space:nowrap;transform:scaleX(1.1797);transform-origin:0 0;-webkit-text-stroke:0.25px currentColor;">Watch now</div>
<div style="left:991.5px;top:163px;width:64px;height:1.5px;background:#f3a4ad;"></div>
<div style="left:886px;top:380px;width:335px;height:1px;background:#e3e3e3;"></div>
<div style="left:886px;top:414px;width:28px;height:28px;border:1px solid #dcdcdc;border-radius:4px;box-sizing:border-box;"><svg width="28" height="28" viewBox="0 0 28 28"><path d="M17.5 8 L11 14 L17.5 20.5" fill="none" stroke="#222" stroke-width="1.3"/></svg></div>
<div style="left:1192px;top:414px;width:28px;height:28px;border:1px solid #dcdcdc;border-radius:4px;box-sizing:border-box;"><svg width="28" height="28" viewBox="0 0 28 28"><path d="M10.5 8 L17 14 L10.5 20.5" fill="none" stroke="#222" stroke-width="1.3"/></svg></div>
<div id="t40" style="left:1015.39px;top:421.70px;font-size:13px;line-height:13px;color:#1c1c1c;white-space:nowrap;font-weight:700;transform:scaleX(1.0753);transform-origin:0 0;">March 2025</div>
<div style="left:883.3px;top:474.17px;width:40px;text-align:center;font-size:11.5px;line-height:11.5px;color:#4d4d4d;transform:scaleX(1.12);-webkit-text-stroke:0.15px #4d4d4d;">30</div>
<div style="left:933.3px;top:474.17px;width:40px;text-align:center;font-size:11.5px;line-height:11.5px;color:#4d4d4d;transform:scaleX(0.92);-webkit-text-stroke:0.15px #4d4d4d;">31</div>
<div style="left:985.8px;top:461.2px;width:35px;height:35px;background:#dedede;border-radius:50%;"></div>
<div style="left:983.3px;top:474.17px;width:40px;text-align:center;font-size:11.5px;line-height:11.5px;color:#1c1c1c;transform:scaleX(0.92);-webkit-text-stroke:0.25px currentColor;">1</div>
<div style="left:1033.3px;top:474.17px;width:40px;text-align:center;font-size:11.5px;line-height:11.5px;color:#4d4d4d;transform:scaleX(1.12);-webkit-text-stroke:0.15px #4d4d4d;">2</div>
<div style="left:1083.3px;top:474.17px;width:40px;text-align:center;font-size:11.5px;line-height:11.5px;color:#4d4d4d;transform:scaleX(1.12);-webkit-text-stroke:0.15px #4d4d4d;">3</div>
<div style="left:1133.3px;top:474.17px;width:40px;text-align:center;font-size:11.5px;line-height:11.5px;color:#4d4d4d;transform:scaleX(1.12);-webkit-text-stroke:0.15px #4d4d4d;">4</div>
<div style="left:1183.3px;top:474.17px;width:40px;text-align:center;font-size:11.5px;line-height:11.5px;color:#4d4d4d;transform:scaleX(1.12);-webkit-text-stroke:0.15px #4d4d4d;">5</div>
<div style="left:883.3px;top:527.42px;width:40px;text-align:center;font-size:11.5px;line-height:11.5px;color:#4d4d4d;transform:scaleX(1.12);-webkit-text-stroke:0.15px #4d4d4d;">6</div>
<div style="left:933.3px;top:527.42px;width:40px;text-align:center;font-size:11.5px;line-height:11.5px;color:#4d4d4d;transform:scaleX(1.12);-webkit-text-stroke:0.15px #4d4d4d;">7</div>
<div style="left:983.3px;top:527.42px;width:40px;text-align:center;font-size:11.5px;line-height:11.5px;color:#4d4d4d;transform:scaleX(1.12);-webkit-text-stroke:0.15px #4d4d4d;">8</div>
<div style="left:1035.8px;top:514.45px;width:35px;height:35px;background:#dedede;border-radius:50%;"></div>
<div style="left:1033.3px;top:527.42px;width:40px;text-align:center;font-size:11.5px;line-height:11.5px;color:#1c1c1c;transform:scaleX(1.12);-webkit-text-stroke:0.25px currentColor;">9</div>
<div style="left:1083.3px;top:527.42px;width:40px;text-align:center;font-size:11.5px;line-height:11.5px;color:#4d4d4d;transform:scaleX(0.92);-webkit-text-stroke:0.15px #4d4d4d;">10</div>
<div style="left:1133.3px;top:527.42px;width:40px;text-align:center;font-size:11.5px;line-height:11.5px;color:#dc0816;transform:scaleX(0.92);-webkit-text-stroke:0.25px currentColor;">11</div>
<div style="left:1183.3px;top:527.42px;width:40px;text-align:center;font-size:11.5px;line-height:11.5px;color:#1c1c1c;transform:scaleX(0.92);-webkit-text-stroke:0.4px currentColor;">12</div>
<div style="left:883.3px;top:580.67px;width:40px;text-align:center;font-size:11.5px;line-height:11.5px;color:#1c1c1c;transform:scaleX(0.92);-webkit-text-stroke:0.4px currentColor;">13</div>
<div style="left:933.3px;top:580.67px;width:40px;text-align:center;font-size:11.5px;line-height:11.5px;color:#1c1c1c;transform:scaleX(0.92);-webkit-text-stroke:0.4px currentColor;">14</div>
<div style="left:985.8px;top:567.7px;width:35px;height:35px;background:#dc0816;border-radius:50%;"></div>
<div style="left:983.3px;top:580.67px;width:40px;text-align:center;font-size:11.5px;line-height:11.5px;color:#fff;transform:scaleX(0.92);-webkit-text-stroke:0.4px currentColor;">15</div>
<div style="left:1033.3px;top:580.67px;width:40px;text-align:center;font-size:11.5px;line-height:11.5px;color:#1c1c1c;transform:scaleX(0.92);-webkit-text-stroke:0.4px currentColor;">16</div>
<div style="left:1083.3px;top:580.67px;width:40px;text-align:center;font-size:11.5px;line-height:11.5px;color:#1c1c1c;transform:scaleX(0.92);-webkit-text-stroke:0.4px currentColor;">17</div>
<div style="left:1133.3px;top:580.67px;width:40px;text-align:center;font-size:11.5px;line-height:11.5px;color:#1c1c1c;transform:scaleX(0.92);-webkit-text-stroke:0.4px currentColor;">18</div>
<div style="left:1185.8px;top:567.7px;width:35px;height:35px;background:#dc0816;border-radius:50%;"></div>
<div style="left:1183.3px;top:580.67px;width:40px;text-align:center;font-size:11.5px;line-height:11.5px;color:#fff;transform:scaleX(0.92);-webkit-text-stroke:0.4px currentColor;">19</div>
<div style="left:883.3px;top:633.92px;width:40px;text-align:center;font-size:11.5px;line-height:11.5px;color:#1c1c1c;transform:scaleX(1.12);-webkit-text-stroke:0.4px currentColor;">20</div>
<div style="left:933.3px;top:633.92px;width:40px;text-align:center;font-size:11.5px;line-height:11.5px;color:#1c1c1c;transform:scaleX(0.92);-webkit-text-stroke:0.4px currentColor;">21</div>
<div style="left:983.3px;top:633.92px;width:40px;text-align:center;font-size:11.5px;line-height:11.5px;color:#1c1c1c;transform:scaleX(1.12);-webkit-text-stroke:0.4px currentColor;">22</div>
<div style="left:1033.3px;top:633.92px;width:40px;text-align:center;font-size:11.5px;line-height:11.5px;color:#1c1c1c;transform:scaleX(1.12);-webkit-text-stroke:0.4px currentColor;">23</div>
<div style="left:1085.8px;top:620.95px;width:35px;height:35px;background:#dc0816;border-radius:50%;"></div>
<div style="left:1083.3px;top:633.92px;width:40px;text-align:center;font-size:11.5px;line-height:11.5px;color:#fff;transform:scaleX(1.12);-webkit-text-stroke:0.4px currentColor;">24</div>
<div style="left:1133.3px;top:633.92px;width:40px;text-align:center;font-size:11.5px;line-height:11.5px;color:#1c1c1c;transform:scaleX(1.12);-webkit-text-stroke:0.4px currentColor;">25</div>
<div style="left:1183.3px;top:633.92px;width:40px;text-align:center;font-size:11.5px;line-height:11.5px;color:#1c1c1c;transform:scaleX(1.12);-webkit-text-stroke:0.4px currentColor;">26</div>
<div style="left:883.3px;top:687.17px;width:40px;text-align:center;font-size:11.5px;line-height:11.5px;color:#1c1c1c;transform:scaleX(1.12);-webkit-text-stroke:0.4px currentColor;">27</div>
<div style="left:933.3px;top:687.17px;width:40px;text-align:center;font-size:11.5px;line-height:11.5px;color:#1c1c1c;transform:scaleX(1.12);-webkit-text-stroke:0.4px currentColor;">28</div>
<div style="left:983.3px;top:687.17px;width:40px;text-align:center;font-size:11.5px;line-height:11.5px;color:#1c1c1c;transform:scaleX(1.12);-webkit-text-stroke:0.4px currentColor;">29</div>
<div style="left:1033.3px;top:687.17px;width:40px;text-align:center;font-size:11.5px;line-height:11.5px;color:#1c1c1c;transform:scaleX(1.12);-webkit-text-stroke:0.4px currentColor;">30</div>
<div style="left:1083.3px;top:687.17px;width:40px;text-align:center;font-size:11.5px;line-height:11.5px;color:#4d4d4d;transform:scaleX(0.92);-webkit-text-stroke:0.15px #4d4d4d;">1</div>
<div style="left:1133.3px;top:687.17px;width:40px;text-align:center;font-size:11.5px;line-height:11.5px;color:#4d4d4d;transform:scaleX(1.12);-webkit-text-stroke:0.15px #4d4d4d;">2</div>
<div style="left:1183.3px;top:687.17px;width:40px;text-align:center;font-size:11.5px;line-height:11.5px;color:#4d4d4d;transform:scaleX(1.12);-webkit-text-stroke:0.15px #4d4d4d;">3</div>
<div style="left:30px;top:792px;width:1257px;height:20px;background:#222;"></div>
<div style="left:30px;top:793px;width:1257px;height:20px;background:#3c3c3c;border-radius:7px 7px 0 0;"></div>
<div style="left:30px;top:15px;width:1257px;height:44px;background:#fff;border-radius:8px 8px 0 0;"></div>
<div style="left:30px;top:59px;width:1257px;height:1px;background:#c9c9c9;"></div>
<div style="left:100px;top:24px;width:1107px;height:26px;background:#eae9e7;"></div>
<div style="left:113px;top:36px;width:233px;height:3px;background:#d8d7d5;border-radius:1.5px;"></div>
<div style="left:53px;top:32.5px;width:30px;height:10px"><svg width="30" height="10" viewBox="0 0 30 10"><path d="M1 5 H10.5 M4.8 1.2 L1 5 L4.8 8.8 M17 5 H26.5 M22.7 1.2 L26.5 5 L22.7 8.8" fill="none" stroke="#c8c8c8" stroke-width="0.95"/></svg></div>
<div style="left:1244px;top:31.7px;width:2px;height:2px;background:#c8c8c8;border-radius:50%;"></div>
<div style="left:1244px;top:36.5px;width:2px;height:2px;background:#c8c8c8;border-radius:50%;"></div>
<div style="left:1244px;top:41.2px;width:2px;height:2px;background:#c8c8c8;border-radius:50%;"></div>
<div style="left:30px;top:60px;width:1257px;height:50px;background:#fff;"></div>
<div style="left:30px;top:110px;width:1257px;height:1px;background:#dcdcdc;"></div>
<div id="t41" style="left:372.92px;top:79.87px;font-size:11.5px;line-height:11.5px;color:#1a1a1a;white-space:nowrap;transform:scaleX(1.1797);transform-origin:0 0;-webkit-text-stroke:0.3px currentColor;">Datasets</div>
<div id="t42" style="left:454.12px;top:79.87px;font-size:11.5px;line-height:11.5px;color:#1a1a1a;white-space:nowrap;transform:scaleX(1.1762);transform-origin:0 0;-webkit-text-stroke:0.3px currentColor;">Data Challenges</div>
<div id="t43" style="left:583.00px;top:79.87px;font-size:11.5px;line-height:11.5px;color:#1a1a1a;white-space:nowrap;transform:scaleX(1.1986);transform-origin:0 0;-webkit-text-stroke:0.3px currentColor;">Achievements</div>
<div id="t44" style="left:697.58px;top:79.87px;font-size:11.5px;line-height:11.5px;color:#1a1a1a;white-space:nowrap;transform:scaleX(1.2224);transform-origin:0 0;-webkit-text-stroke:0.3px currentColor;">How to Begin</div>
<div id="t45" style="left:808.31px;top:79.87px;font-size:11.5px;line-height:11.5px;color:#1a1a1a;white-space:nowrap;transform:scaleX(1.1892);transform-origin:0 0;-webkit-text-stroke:0.3px currentColor;">News</div>
<div id="t46" style="left:869.97px;top:79.87px;font-size:11.5px;line-height:11.5px;color:#1a1a1a;white-space:nowrap;transform:scaleX(1.2641);transform-origin:0 0;-webkit-text-stroke:0.3px currentColor;">Community</div>
<div style="left:870.7px;top:107.5px;width:73.3px;height:3px;background:#dc0816;"></div>
<div id="t47" style="left:1145.25px;top:79.87px;font-size:11.5px;line-height:11.5px;color:#1a1a1a;white-space:nowrap;transform:scaleX(1.1079);transform-origin:0 0;-webkit-text-stroke:0.3px currentColor;">Sign In</div>
<div style="left:1205px;top:71px;width:69px;height:27px;background:#dc0816;border-radius:4px;"></div>
<div id="t48" style="left:1216.73px;top:79.87px;font-size:11.5px;line-height:11.5px;color:#fff;white-space:nowrap;transform:scaleX(1.0988);transform-origin:0 0;-webkit-text-stroke:0.45px currentColor;">Sign Up</div>
<div style="left:40px;top:60px;width:41px;height:79px;background:#dc0816;"></div>
<div style="left:40px;top:139px;width:41px;height:20px;background:#3b3b3b;border-radius:0 0 3px 3px;"></div>
<div id="t49" style="left:45.81px;top:132.97px;font-size:16px;line-height:16px;color:#fff;white-space:nowrap;transform-origin:0 0;transform:rotate(-90deg) scaleX(0.9672);-webkit-text-stroke:0.35px #fff;">BRITISH</div>
<div id="t50" style="left:75.02px;top:64.08px;font-size:15.5px;line-height:15.5px;color:#fff;white-space:nowrap;transform-origin:0 0;transform:rotate(90deg) scaleX(0.9231);-webkit-text-stroke:0.35px #fff;">LIBRARY</div>
<div id="t51" style="left:47.13px;top:144.66px;font-size:9.5px;line-height:9.5px;color:#fff;white-space:nowrap;transform:scaleX(0.9451);transform-origin:0 0;letter-spacing:1.6px;-webkit-text-stroke:0.35px #fff;">LABS</div>
</body></html>
